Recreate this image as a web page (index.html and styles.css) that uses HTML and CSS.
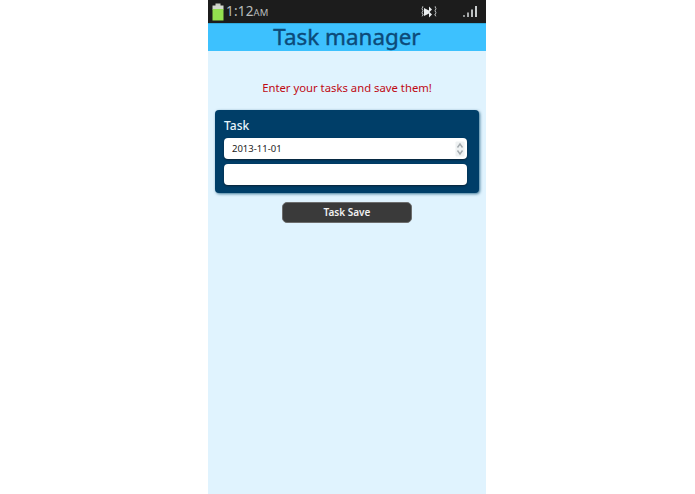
FILE: index.html
```html
<!DOCTYPE html>
<html lang="en">
<head>
<meta charset="utf-8">
<title>Task manager</title>
<link rel="stylesheet" href="styles.css">
</head>
<body>
<main class="phone">
  <div class="status">
    <svg class="battery" width="12" height="18" viewBox="0 0 12 18"><rect x="3.500" y="0.500" width="5" height="3" fill="#c9cfc4"/><rect x="0.500" y="2.500" width="11" height="4" fill="#d3d8cd"/><rect x="0.500" y="6" width="11" height="11.500" fill="#93e04f"/></svg>
    <span class="time">1:12<small>AM</small></span>
    <svg class="mute" width="16" height="14" viewBox="0 0 16 14"><path d="M3 3 8 5.500V1.500l3 3-2.500 2.500 2.500 2.500-3 3v-4L3 11z" fill="#eceff0"/><path d="M2 1.500 1 3.500l1 2-1 2 1 2-1 2M14 1.500l1 2-1 2 1 2-1 2 1 2" fill="none" stroke="#d5d8d9" stroke-width="1.100" stroke-dasharray="1.500 .7"/></svg>
    <svg class="signal" width="14" height="11" viewBox="0 0 14 11"><rect x="0" y="9" width="2" height="2" fill="#8f9293"/><rect x="4" y="6.500" width="2" height="4.500" fill="#a9acad"/><rect x="8" y="3.500" width="2" height="7.500" fill="#bcbfc0"/><rect x="12" y="0" width="2" height="11" fill="#c9cccd"/></svg>
  </div>
  <header class="appbar"><h1>Task manager</h1></header>
  <p class="prompt">Enter your tasks and save them!</p>
  <form class="panel">
    <label class="panel-label" for="date">Task</label>
    <div class="field">
      <input class="input" id="date" type="text" value="2013-11-01">
      <svg class="spin" width="10" height="16" viewBox="0 0 10 16"><rect x="0.500" y="0.500" width="9" height="15" rx="1" fill="#eef1f2"/><path d="M2.500 6.500 5 3l2.500 3.500M2.500 9.500 5 13l2.500-3.500" fill="none" stroke="#a3a9ad" stroke-width="1.400"/></svg>
    </div>
    <div class="field"><input class="input" type="text" aria-label="Task"></div>
  </form>
  <div class="actions"><button class="save" type="button">Task Save</button></div>
</main>
</body>
</html>
```
FILE: styles.css
```css
* { box-sizing: border-box; }
html, body { height: 100%; }
body { margin: 0; background: #fff; font-family: "Noto Sans", "DejaVu Sans", sans-serif; overflow: hidden; }
.phone { width: 278px; height: 494px; margin-left: 208px; background: #e0f3fe; }
.status { height: 23px; background: #1c1c1c; display: flex; align-items: center; padding: 0 9px 0 4px; color: #b9bcbd; }
.battery { flex: none; margin-top: 1px; }
.time { margin-left: 2px; font: 13.500px/23px "Noto Sans", sans-serif; letter-spacing: .2px; }
.time small { font-size: 9.500px; letter-spacing: 0; }
.mute { margin-left: auto; margin-right: 26px; }
.signal { flex: none; }
.appbar { height: 28px; background: #3dc1fe; border-top: 1px solid #2fa9dc; display: flex; justify-content: center; padding-bottom: 2px; align-items: center; }
.appbar h1 { margin: 0; font-size: 22.400px; font-weight: 400; line-height: 25px; color: #0c4a79; -webkit-text-stroke: .4px #0c4a79; }
.prompt { margin: 0; padding-top: 29px; height: 59px; text-align: center; font-size: 11.300px; line-height: 16px; color: #bf0a14; }
.panel { margin: 0 7px; height: 83px; background: #003e68; border-radius: 4px; box-shadow: 1px 1px 3px #3f7796; padding: 7px 12px 0 9px; display: flex; flex-direction: column; }
.panel-label { font-size: 12px; font-weight: 500; line-height: 18px; height: 21px; color: #e8f4fb; }
.field { position: relative; height: 21px; margin-bottom: 5px; }
.input { display: block; width: 100%; height: 100%; border: 0; border-radius: 4px; background: #fff; padding: 0 8px; font: 9.500px "Noto Sans", sans-serif; color: #222; box-shadow: 0 1px 2px #0a2235; outline: 0; }
.spin { position: absolute; right: 2px; top: 3px; }
.actions { display: flex; justify-content: center; padding-top: 9px; }
.save { width: 130px; height: 21px; border: 1px solid #6d6d6d; border-radius: 5px; background: #3a3a3a; color: #f0f0f0; font: 600 10px "Noto Sans", sans-serif; padding: 0 0 2px; }
```
